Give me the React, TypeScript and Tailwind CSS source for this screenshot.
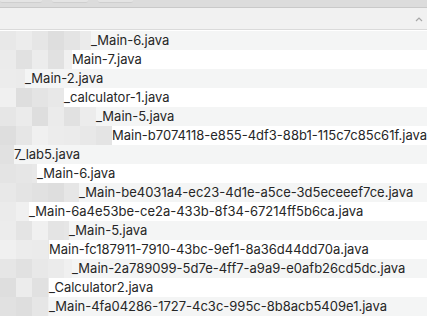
import React from "react";

const shades = ["#e4e4e4", "#ececec", "#dedede", "#e8e8e8", "#f0f0f0", "#e1e1e1", "#ebebeb", "#e6e6e6"];

type Row = { start: number; text: string };

const rows: Row[] = [
  { start: 91, text: "_Main-6.java" },
  { start: 72, text: "Main-7.java" },
  { start: 25, text: "_Main-2.java" },
  { start: 64, text: "_calculator-1.java" },
  { start: 96, text: "_Main-5.java" },
  { start: 112, text: "Main-b7074118-e855-4df3-88b1-115c7c85c61f.java" },
  { start: 14, text: "7_lab5.java" },
  { start: 37, text: "_Main-6.java" },
  { start: 79, text: "_Main-be4031a4-ec23-4d1e-a5ce-3d5eceeef7ce.java" },
  { start: 29, text: "_Main-6a4e53be-ce2a-433b-8f34-67214ff5b6ca.java" },
  { start: 69, text: "_Main-5.java" },
  { start: 49, text: "Main-fc187911-7910-43bc-9ef1-8a36d44dd70a.java" },
  { start: 72, text: "_Main-2a789099-5d7e-4ff7-a9a9-e0afb26cd5dc.java" },
  { start: 49, text: "_Calculator2.java" },
  { start: 49, text: "_Main-4fa04286-1727-4c3c-995c-8b8acb5409e1.java" },
];

function Mosaic({ width, seed }: { width: number; seed: number }) {
  const blocks: number[] = [];
  let w = width;
  while (w > 0) {
    blocks.push(Math.min(16, w));
    w -= 16;
  }
  return (
    <div className="flex h-full shrink-0" style={{ width }}>
      {blocks.map((bw, i) => (
        <div
          key={i}
          className="h-full"
          style={{ width: bw, background: shades[(seed * 3 + i * 5 + (i * seed) % 3) % shades.length] }}
        />
      ))}
    </div>
  );
}

export default function App() {
  return (
    <div
      className="w-[427px] h-[335px] bg-white overflow-hidden flex flex-col"
      style={{ fontFamily: "Inter, 'Noto Sans', sans-serif" }}
    >
      <div className="h-[8px] bg-[#dcdcdc] border-b border-[#c9c9c9] flex gap-[10px] items-start shrink-0">
        <div className="w-[42px] h-[3px] bg-[#e4e4e4] rounded-b-[2px] border-b border-[#cfcfcf]" />
        <div className="w-[36px] h-[3px] bg-[#e4e4e4] rounded-b-[2px] border-b border-[#cfcfcf]" />
        <div className="w-[35px] h-[3px] bg-[#e4e4e4] rounded-b-[2px] border-b border-[#cfcfcf]" />
      </div>
      <div className="h-[22px] bg-[#f1f1f1] border-b border-[#dadada] flex items-center justify-end pr-[4px] shrink-0">
        <svg width="8" height="6" viewBox="0 0 8 6">
          <polyline points="1,5 4,2 7,5" fill="none" stroke="#a8a8a8" strokeWidth="1.2" />
        </svg>
      </div>
      <div className="h-[1px] shrink-0" />
      {rows.map((r, i) => (
        <div
          key={i}
          className={`h-[19px] flex items-center shrink-0 ${i % 2 === 0 ? "bg-[#f4f5f5]" : "bg-white"}`}
        >
          <Mosaic width={r.start} seed={i + 1} />
          <span className="text-[13px] leading-[19px] text-[#262626] whitespace-nowrap">{r.text}</span>
        </div>
      ))}
    </div>
  );
}
